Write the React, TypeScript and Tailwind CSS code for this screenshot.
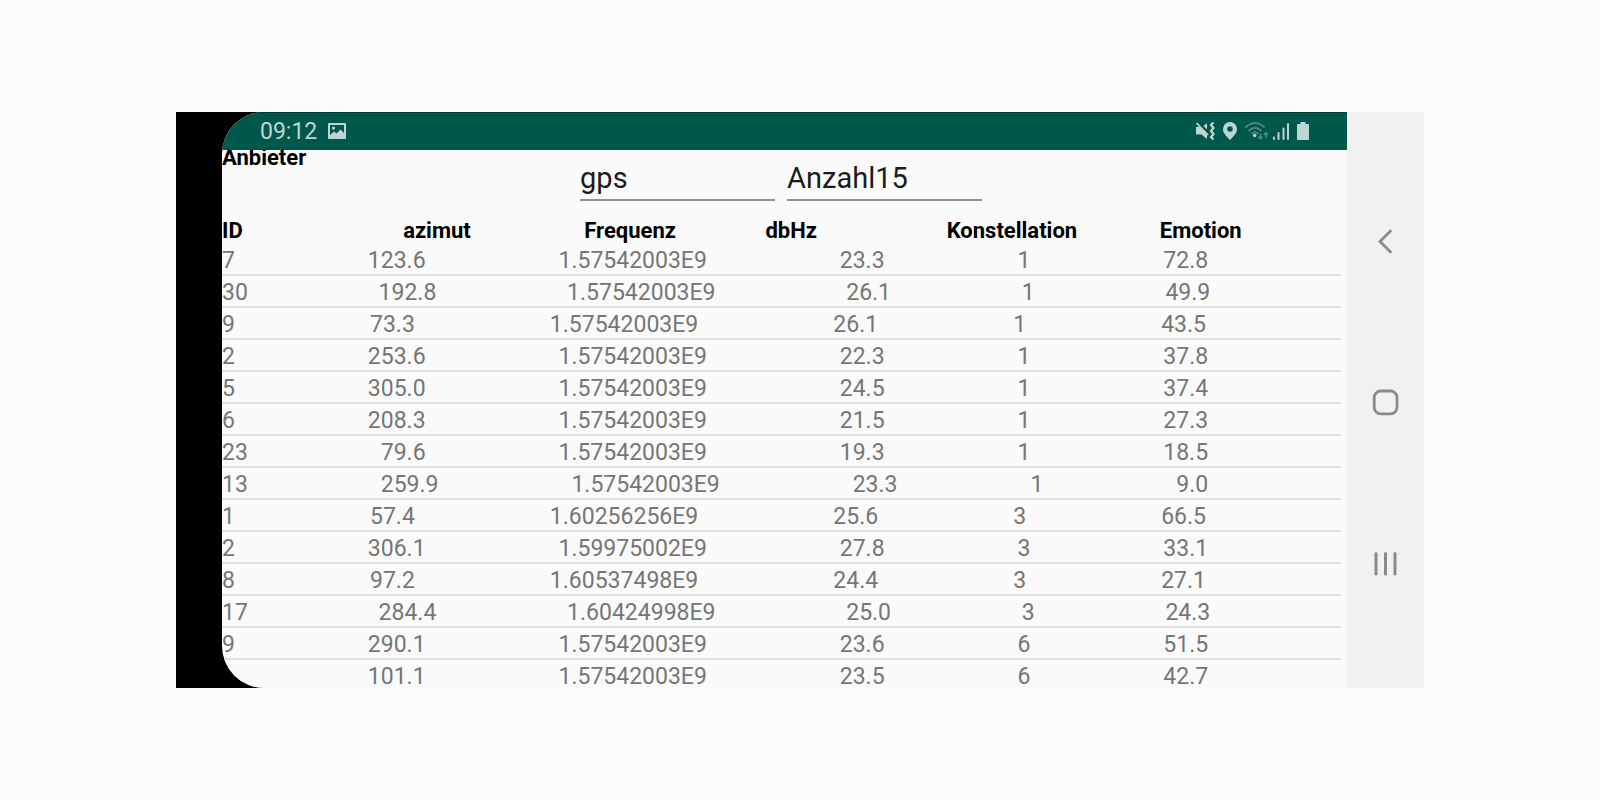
const headers = ["ID", "azimut", "Frequenz", "dbHz", "Konstellation", "Emotion"];

const satellites = [
  ["7", "123.6", "1.57542003E9", "23.3", "1", "72.8"],
  ["30", "192.8", "1.57542003E9", "26.1", "1", "49.9"],
  ["9", "73.3", "1.57542003E9", "26.1", "1", "43.5"],
  ["2", "253.6", "1.57542003E9", "22.3", "1", "37.8"],
  ["5", "305.0", "1.57542003E9", "24.5", "1", "37.4"],
  ["6", "208.3", "1.57542003E9", "21.5", "1", "27.3"],
  ["23", "79.6", "1.57542003E9", "19.3", "1", "18.5"],
  ["13", "259.9", "1.57542003E9", "23.3", "1", "9.0"],
  ["1", "57.4", "1.60256256E9", "25.6", "3", "66.5"],
  ["2", "306.1", "1.59975002E9", "27.8", "3", "33.1"],
  ["8", "97.2", "1.60537498E9", "24.4", "3", "27.1"],
  ["17", "284.4", "1.60424998E9", "25.0", "3", "24.3"],
  ["9", "290.1", "1.57542003E9", "23.6", "6", "51.5"],
  ["\u2007", "101.1", "1.57542003E9", "23.5", "6", "42.7"],
];

function StatusBar() {
  return (
    <header className="flex h-[38px] shrink-0 items-center justify-between border-t border-[#003d2c] bg-[#00574b] px-[38px] pb-px text-[#bfd5d2]">
      <div className="flex items-center gap-[11px]">
        <span className="pt-px text-[23px] leading-8">09:12</span>
        <svg width="18" height="16" viewBox="0 0 18 16" aria-label="Bild">
          <path
            fill="currentColor"
            fillRule="evenodd"
            d="M1 0H17Q18 0 18 1V15Q18 16 17 16H1Q0 16 0 15V1Q0 0 1 0ZM2 2V12L6 8.5L8.5 10.5L12.5 6.5L16 10V2ZM5.5 3.5a1.6 1.6 0 1 1 0 3.2a1.6 1.6 0 1 1 0-3.2Z"
          />
        </svg>
      </div>
      <div className="flex items-center gap-2">
        <svg width="19" height="18" viewBox="0 0 19 18" aria-label="Vibration">
          <path fill="currentColor" d="M0 5H4.5L11 11.5V17L5.5 12.5H0ZM11 1V7.5L7.5 4Z" />
          <path stroke="currentColor" strokeWidth="1.8" fill="none" d="M0.5 1L12 13" />
          <path
            stroke="currentColor"
            strokeWidth="2.2"
            fill="none"
            d="M17.5 0.5L15 3L17.5 6L15 9L17.5 12L15 15L17.5 17.5"
          />
        </svg>
        <svg width="14" height="18" viewBox="0 0 14 18" aria-label="Standort">
          <path
            fill="currentColor"
            fillRule="evenodd"
            d="M7 0A7 7 0 0 1 14 7C14 11 10.5 14.5 7 18C3.5 14.5 0 11 0 7A7 7 0 0 1 7 0ZM7 4.2a2.8 2.8 0 1 0 0 5.6a2.8 2.8 0 1 0 0-5.6Z"
          />
        </svg>
        <svg className="-mr-1" width="24" height="18" viewBox="0 0 24 18" aria-label="WLAN">
          <g fill="none" stroke="#4c8b82" strokeWidth="1.8">
            <path d="M0.5 5.5Q10 -3.5 19.5 5.5" />
            <path d="M3.5 9Q10 2.5 16.5 9" />
            <path d="M6.5 12Q10 8.5 13.5 12" />
            <path strokeWidth="1.4" d="M15.5 11.5V17M13.5 14.5L15.5 17L17.5 14.5M21 16V10.5M19 13L21 10.5L23 13" />
          </g>
          <circle cx="9.7" cy="13.5" r="1.7" fill="currentColor" />
        </svg>
        <svg width="16" height="18" viewBox="0 0 16 18" aria-label="Signal">
          <path
            stroke="currentColor"
            strokeWidth="2"
            strokeLinecap="round"
            d="M1 15.5V17M5.5 11V17M10.5 6.5V17M15 2V17"
          />
        </svg>
        <svg width="12" height="18" viewBox="0 0 12 18" aria-label="Akku">
          <path
            fill="currentColor"
            d="M3.5 2V0.5Q3.5 0 4 0H8Q8.5 0 8.5 0.5V2H11Q12 2 12 3V17Q12 18 11 18H1Q0 18 0 17V3Q0 2 1 2Z"
          />
        </svg>
      </div>
    </header>
  );
}

function NavigationBar() {
  return (
    <nav className="flex w-[77px] shrink-0 flex-col items-center justify-between bg-[#f1f1f1] pt-[105px] pb-[100px] text-[#8b8b8b]">
      <button type="button" aria-label="Zurück" className="flex size-12 items-center justify-center">
        <svg width="28" height="28" viewBox="0 0 28 28" fill="none" stroke="currentColor" strokeWidth="2.8">
          <path strokeLinecap="round" d="M18.5 4L8 14.5L18.5 25" />
        </svg>
      </button>
      <button type="button" aria-label="Startseite" className="flex size-12 items-center justify-center">
        <svg width="28" height="28" viewBox="0 0 28 28" fill="none" stroke="currentColor" strokeWidth="2.8">
          <rect x="2.2" y="2" width="22.8" height="22.8" rx="6.5" />
        </svg>
      </button>
      <button type="button" aria-label="Letzte Apps" className="flex size-12 items-center justify-center">
        <svg width="28" height="28" viewBox="0 0 28 28" fill="none" stroke="currentColor" strokeWidth="3">
          <path strokeLinecap="round" d="M4 3.5V24M13.5 3.5V24M23 3.5V24" />
        </svg>
      </button>
    </nav>
  );
}

export default function App() {
  return (
    <div className="min-h-screen bg-[#fcfcfc] px-[11%] py-28 font-['Roboto',sans-serif]">
      <div className="flex aspect-[13/6] w-full overflow-hidden bg-black pl-[46px]">
        <div className="flex min-w-0 flex-1 flex-col overflow-hidden rounded-l-[42px] bg-[#fafafa]">
          <StatusBar />
          <main className="min-h-0 flex-1 overflow-hidden pr-1.5">
            <div className="flex h-[68px]">
              <label htmlFor="provider" className="-mt-1.5 w-[32%] text-[22px] leading-7 font-bold text-black">
                Anbieter
              </label>
              <div className="flex gap-3 pt-2">
                <input
                  id="provider"
                  defaultValue="gps"
                  className="h-[43px] w-[195px] border-b-2 border-[#919191] pt-px text-[29px] text-[#1c1c1c] outline-none"
                />
                <input
                  aria-label="Anzahl"
                  defaultValue="Anzahl15"
                  className="h-[43px] w-[195px] border-b-2 border-[#919191] pt-px text-[29px] text-[#1c1c1c] outline-none"
                />
              </div>
            </div>
            <table className="block w-full text-left text-[23px] leading-[26px]">
              <thead className="block">
                <tr className="grid grid-cols-[181fr_181fr_181fr_181fr_213fr_181fr] text-[22px] text-black">
                  {headers.map((header) => (
                    <th key={header} className="font-bold">
                      {header}
                    </th>
                  ))}
                </tr>
              </thead>
              <tbody className="block text-[#767676]">
                {satellites.map((row, i) => (
                  <tr key={i} className="flex h-8 border-b-2 border-[#dfdfdf] pt-1">
                    {row.map((value, j) => (
                      <td key={j} className="grow">
                        {value}
                      </td>
                    ))}
                  </tr>
                ))}
              </tbody>
            </table>
          </main>
        </div>
        <NavigationBar />
      </div>
    </div>
  );
}
